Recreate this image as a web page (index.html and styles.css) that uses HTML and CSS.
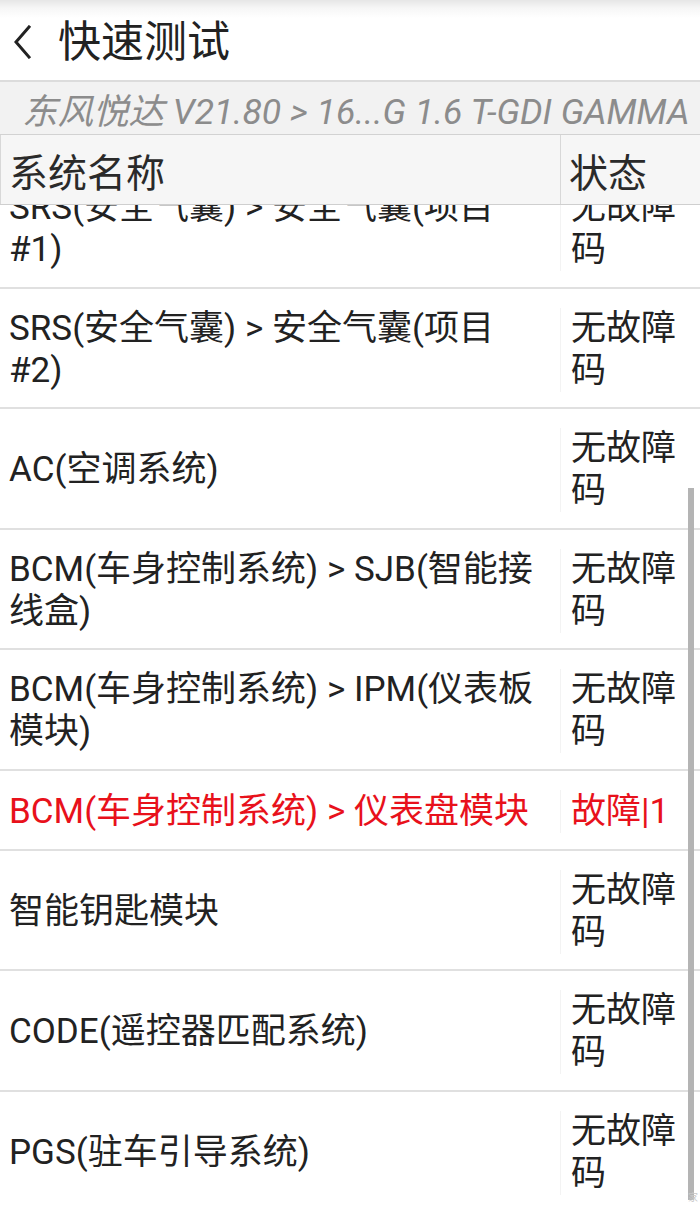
FILE: index.html
```html
<!DOCTYPE html>
<html lang="zh-CN">
<head>
<meta charset="utf-8">
<title>快速测试</title>
<link rel="stylesheet" href="styles.css">
</head>
<body>
<div class="screen">
  <header class="title-bar">
    <svg class="back" width="20" height="34" viewBox="0 0 20 34" aria-hidden="true">
      <path d="M16 2 L3 17 L16 32" fill="none" stroke="#222" stroke-width="3" stroke-linecap="square"/>
    </svg>
    <h1 class="title">快速测试</h1>
  </header>
  <div class="subtitle">东风悦达 V21.80 &gt; 16...G 1.6 T-GDI GAMMA</div>
  <div class="thead">
    <div class="th th-name">系统名称</div>
    <div class="th th-status">状态</div>
  </div>
  <div class="tbody">
    <div class="rows">
      <div class="row"><div class="c-name">SRS(安全气囊) &gt; 安全气囊(项目#1)</div><div class="c-status">无故障码</div></div>
      <div class="row"><div class="c-name">SRS(安全气囊) &gt; 安全气囊(项目#2)</div><div class="c-status">无故障码</div></div>
      <div class="row"><div class="c-name">AC(空调系统)</div><div class="c-status">无故障码</div></div>
      <div class="row"><div class="c-name">BCM(车身控制系统) &gt; SJB(智能接线盒)</div><div class="c-status">无故障码</div></div>
      <div class="row"><div class="c-name">BCM(车身控制系统) &gt; IPM(仪表板模块)</div><div class="c-status">无故障码</div></div>
      <div class="row fault"><div class="c-name">BCM(车身控制系统) &gt; 仪表盘模块</div><div class="c-status">故障|1</div></div>
      <div class="row"><div class="c-name">智能钥匙模块</div><div class="c-status">无故障码</div></div>
      <div class="row"><div class="c-name">CODE(遥控器匹配系统)</div><div class="c-status">无故障码</div></div>
      <div class="row"><div class="c-name">PGS(驻车引导系统)</div><div class="c-status">无故障码</div></div>
    </div>
    <div class="scrollbar"></div>
    <span class="mark">家</span>
  </div>
</div>
</body>
</html>
```

FILE: styles.css
```css
* { box-sizing: border-box; }
html, body { margin: 0; padding: 0; }
body {
  width: 700px;
  height: 1206px;
  overflow: hidden;
  background: #fff;
  font-family: "Roboto", "Noto Sans CJK SC", sans-serif;
  color: #222;
}
.screen {
  display: flex;
  flex-direction: column;
  height: 1206px;
}
.title-bar {
  height: 82px;
  flex: none;
  display: flex;
  align-items: center;
  padding: 4px 0 0 13px;
  background: linear-gradient(#e6e6e6 0, #f6f6f6 8px, #fff 18px);
  border-bottom: 2px solid #dcdcdc;
}
.back { flex: none; }
.title {
  margin: 0 0 0 25px;
  font-size: 43px;
  font-weight: 400;
  line-height: 1;
  color: #222;
}
.subtitle {
  height: 53px;
  flex: none;
  display: flex;
  align-items: center;
  padding-left: 22px;
  padding-top: 1px;
  background: #f2f2f2;
  border-bottom: 1px solid #d2d2d2;
  font-size: 35.5px;
  font-style: italic;
  color: #8c8c8c;
  white-space: nowrap;
  overflow: hidden;
}
.thead {
  height: 70px;
  flex: none;
  display: flex;
  background: #f6f6f6;
  border-bottom: 1px solid #cfcfcf;
}
.th {
  display: flex;
  align-items: center;
  padding-left: 8px;
  font-size: 39px;
  color: #2a2a2a;
}
.th-name { width: 560px; border-left: 1px solid #d8d8d8; }
.th-status { flex: 1; border-left: 1px solid #d8d8d8; }
.tbody {
  position: relative;
  flex: 1;
  overflow: hidden;
}
.rows { margin-top: -37px; }
.row {
  display: flex;
  align-items: center;
  min-height: 80px;
  padding: 19.25px 0 15.25px;
  border-bottom: 2px solid #e0e0e0;
  font-size: 35px;
  line-height: 42px;
  color: #222;
}
.c-name {
  width: 560px;
  flex: none;
  padding: 0 14px 0 9px;
}
.c-status {
  flex: 1;
  padding: 0 20px 0 10px;
  align-self: stretch;
  display: flex;
  align-items: center;
  border-left: 1px solid #f3f3f3;
}
.row.fault { color: #e8111b; }
.scrollbar {
  position: absolute;
  right: 6px;
  top: 283px;
  bottom: 6px;
  width: 6px;
  background: #b4b4b4;
}
.mark {
  position: absolute;
  right: 2px;
  bottom: 3px;
  font-size: 10px;
  line-height: 1;
  color: #c8c8c8;
}
```
